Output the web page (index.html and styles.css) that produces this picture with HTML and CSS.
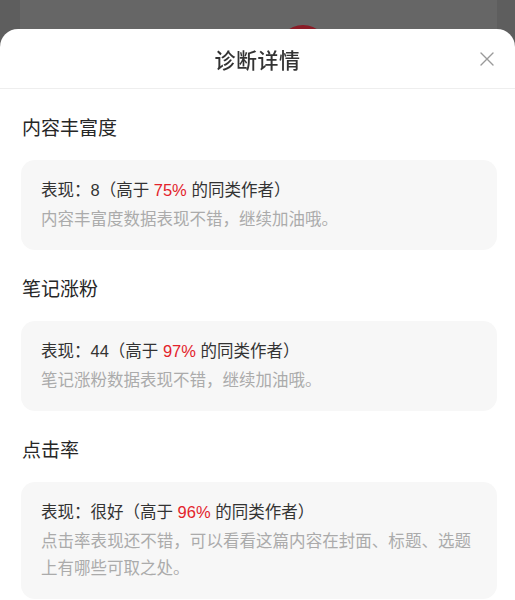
FILE: index.html
```html
<!DOCTYPE html>
<html lang="zh-CN">
<head>
    <meta charset="UTF-8">
    <meta name="viewport" content="width=device-width, initial-scale=1.0">
    <title>诊断详情</title>
    <link rel="stylesheet" href="styles.css">
</head>
<body>
    <div class="backdrop">
        <div class="backdrop-card">
            <div class="backdrop-circle"></div>
        </div>
    </div>

    <div class="sheet">
        <div class="sheet-header">
            <h1>诊断详情</h1>
            <button class="close-btn" aria-label="关闭">
                <svg width="14" height="14" viewBox="0 0 14 14">
                    <path d="M1 1 L13 13 M13 1 L1 13" stroke="#9a9a9a" stroke-width="1.4" fill="none" stroke-linecap="round"/>
                </svg>
            </button>
        </div>

        <div class="sheet-body">
            <div class="section">
                <h2>内容丰富度</h2>
                <div class="card">
                    <p class="score">表现：8（高于 <span class="pct">75%</span> 的同类作者）</p>
                    <p class="desc">内容丰富度数据表现不错，继续加油哦。</p>
                </div>
            </div>

            <div class="section">
                <h2>笔记涨粉</h2>
                <div class="card">
                    <p class="score">表现：44（高于 <span class="pct">97%</span> 的同类作者）</p>
                    <p class="desc">笔记涨粉数据表现不错，继续加油哦。</p>
                </div>
            </div>

            <div class="section">
                <h2>点击率</h2>
                <div class="card">
                    <p class="score">表现：很好（高于 <span class="pct">96%</span> 的同类作者）</p>
                    <p class="desc">点击率表现还不错，可以看看这篇内容在封面、标题、选题上有哪些可取之处。</p>
                </div>
            </div>
        </div>
    </div>
</body>
</html>
```

FILE: styles.css
```css
*{
    box-sizing: border-box;
}
body{
    margin: 0;
    background-color: #5e5e5e;
    font-family: "Liberation Sans", "Noto Sans CJK SC", sans-serif;
    color: #333333;
    overflow: hidden;
    text-spacing-trim: space-all;
}
/* dimmed page behind the sheet */
.backdrop{
    position: fixed;
    top: 0;
    left: 0;
    right: 0;
    bottom: 0;
    padding: 0 18px 0 20px;
}
.backdrop-card{
    position: relative;
    height: 100%;
    background-color: #666666;
}
.backdrop-circle{
    position: absolute;
    top: 25px;
    left: 257px;
    width: 52px;
    height: 52px;
    border-radius: 50%;
    background-color: #8a1b26;
}
.sheet{
    position: relative;
    margin-top: 29px;
    background-color: #ffffff;
    border-radius: 18px 18px 0 0;
    min-height: 571px;
}
.sheet-header{
    height: 60px;
    display: flex;
    align-items: center;
    justify-content: center;
    border-bottom: 1px solid #eeeeee;
    position: relative;
}
.sheet-header h1{
    margin: 0;
    font-size: 21px;
    font-weight: 500;
    color: #333333;
    letter-spacing: 0.5px;
}
.close-btn{
    position: absolute;
    right: 21px;
    top: 23px;
    width: 14px;
    height: 14px;
    padding: 0;
    border: 0;
    background: none;
    display: flex;
}
.sheet-body{
    padding: 0 18px 0 21px;
}
.section{
    padding-top: 27px;
}
.section h2{
    margin: 0 0 18px 1px;
    font-size: 19px;
    line-height: 26px;
    font-weight: 400;
    color: #262626;
}
.card{
    background-color: #f7f7f7;
    border-radius: 14px;
    padding: 17px 26px 17px 20px;
}
.card p{
    margin: 0;
}
.score{
    font-size: 16.5px;
    line-height: 26px;
    color: #333333;
}
.pct{
    color: #e3232b;
}
.desc{
    margin-top: 3px !important;
    font-size: 16.5px;
    line-height: 27px;
    color: #ababab;
    text-align: justify;
}
```
